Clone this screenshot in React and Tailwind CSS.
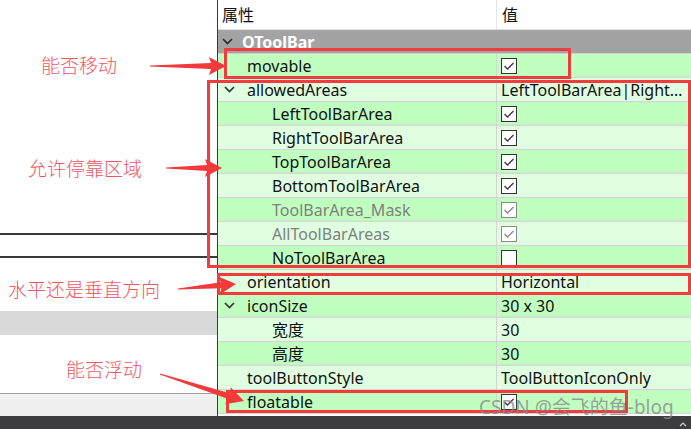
import React from "react";

const rows = [
  { name: "movable", level: 1, check: "on", tone: "dark" },
  { name: "allowedAreas", level: 1, expand: true, value: "LeftToolBarArea|RightToolBarArea|TopToolBarArea", tone: "light" },
  { name: "LeftToolBarArea", level: 2, check: "on", tone: "dark" },
  { name: "RightToolBarArea", level: 2, check: "on", tone: "light" },
  { name: "TopToolBarArea", level: 2, check: "on", tone: "dark" },
  { name: "BottomToolBarArea", level: 2, check: "on", tone: "light" },
  { name: "ToolBarArea_Mask", level: 2, check: "dis", tone: "dark", muted: true },
  { name: "AllToolBarAreas", level: 2, check: "dis", tone: "light", muted: true },
  { name: "NoToolBarArea", level: 2, check: "off", tone: "dark" },
  { name: "orientation", level: 1, value: "Horizontal", tone: "light" },
  { name: "iconSize", level: 1, expand: true, value: "30 x 30", tone: "dark" },
  { name: "宽度", level: 2, value: "30", tone: "light" },
  { name: "高度", level: 2, value: "30", tone: "dark" },
  { name: "toolButtonStyle", level: 1, value: "ToolButtonIconOnly", tone: "light" },
  { name: "floatable", level: 1, check: "on", tone: "dark" },
];

function Chevron({ color = "#333" }) {
  return (
    <svg width="11" height="7" viewBox="0 0 11 7">
      <path d="M1 1 L5.5 5.5 L10 1" fill="none" stroke={color} strokeWidth="1.7" />
    </svg>
  );
}

function Check({ state }) {
  const dis = state === "dis";
  return (
    <div
      className={`w-[16px] h-[16px] bg-white border flex items-center justify-center ${
        dis ? "border-[#8a8a8a]" : "border-[#333]"
      }`}
    >
      {state !== "off" && (
        <svg width="12" height="10" viewBox="0 0 12 10">
          <path
            d="M1.5 5 L4.5 8 L10.5 2"
            fill="none"
            stroke={dis ? "#8c8c8c" : "#3c3c3c"}
            strokeWidth="1.4"
          />
        </svg>
      )}
    </div>
  );
}

// long thin red annotation arrow, tail at (x1,y1), tip at (x2,y2)
function Arrow({ x1, y1, x2, y2 }) {
  const dx = x2 - x1;
  const dy = y2 - y1;
  const L = Math.sqrt(dx * dx + dy * dy);
  const a = (Math.atan2(dy, dx) * 180) / Math.PI;
  const pts = `0,-0.5 ${L - 15},-3 ${L - 17},-9 ${L},0 ${L - 17},9 ${L - 15},3 0,0.5`;
  return (
    <g transform={`translate(${x1} ${y1}) rotate(${a})`}>
      <polygon points={pts} fill="#f23a3a" />
    </g>
  );
}

function Box({ className }) {
  return <div className={`absolute border-[3px] border-[#f03c3c] ${className}`} />;
}

export default function App() {
  const cjk = { fontFamily: '"Noto Sans", "Noto Sans CJK SC", sans-serif' };
  return (
    <div className="relative w-[691px] h-[429px] overflow-hidden bg-white" style={cjk}>
      <div className="flex h-[416px]">
        {/* left side panel */}
        <div className="w-[218px] shrink-0 flex flex-col border-r border-[#3a3a3a]">
          <div className="h-[233px]" />
          <div className="h-[25px] border-t-2 border-b-2 border-[#3a3a3a]" />
          <div className="h-[53px]" />
          <div className="h-[24px] bg-[#d9d9d9]" />
          <div className="h-[58px]" />
          <div className="flex-1 border-t border-[#a0a0a0] bg-[#f0f0f0]" />
        </div>

        {/* property editor */}
        <div className="flex-1 min-w-0 flex flex-col text-[16px] text-[#111]">
          <div className="h-[30px] shrink-0 flex bg-white border-b border-[#e0e0e0]">
            <div className="w-[279px] shrink-0 pl-[4px] flex items-center border-r border-[#e6e6e6]">属性</div>
            <div className="flex-1 pl-[5px] flex items-center">值</div>
          </div>
          <div className="h-[24px] shrink-0 flex items-center bg-[#a3a3a3] border-b border-[#d0d0d0]">
            <div className="w-[24px] pl-[4px] flex items-center">
              <Chevron color="#2e2e2e" />
            </div>
            <span className="text-white font-bold">QToolBar</span>
          </div>
          {rows.map((r) => (
            <div
              key={r.name}
              className={`h-[24px] shrink-0 flex border-b border-[#d4d4d4] ${
                r.tone === "dark" ? "bg-[#c0ffc0]" : "bg-[#e0ffe0]"
              }`}
            >
              <div className="w-[279px] shrink-0 flex items-center border-r border-[#d4d4d4]">
                <div className="w-[29px] pl-[6px] flex items-center">
                  {r.expand && <Chevron />}
                </div>
                <span className={`${r.level === 2 ? "pl-[25px]" : ""} ${r.muted ? "text-[#808080]" : ""}`}>
                  {r.name}
                </span>
              </div>
              <div className="flex-1 min-w-0 pl-[4px] pr-[2px] flex items-center">
                {r.check ? (
                  <Check state={r.check} />
                ) : (
                  <span className="min-w-0 whitespace-nowrap overflow-hidden text-ellipsis">{r.value}</span>
                )}
              </div>
            </div>
          ))}
        </div>
      </div>
      <div className="h-[13px] bg-[#3c3c3e] flex justify-end items-end pr-[4px]">
        <svg width="8" height="5" viewBox="0 0 8 5" className="mb-[2px]">
          <path d="M1 4 L4 1 L7 4" fill="none" stroke="#cfcfcf" strokeWidth="1.2" />
        </svg>
      </div>

      {/* annotations */}
      <Box className="left-[224px] top-[48px] w-[347px] h-[31px]" />
      <Box className="left-[207px] top-[80px] w-[484px] h-[188px]" />
      <Box className="left-[217px] top-[273px] w-[474px] h-[22px]" />
      <Box className="left-[226px] top-[390px] w-[402px] h-[23px]" />

      <svg className="absolute inset-0" width="691" height="429">
        <Arrow x1={150} y1={66} x2={226} y2={66} />
        <Arrow x1={166} y1={168} x2={222} y2={168} />
        <Arrow x1={178} y1={289} x2={236} y2={284} />
        <Arrow x1={160} y1={374} x2={244} y2={401} />
      </svg>

      <div
        className="absolute inset-0 text-[19px] font-light text-[#f25560] leading-none"
        style={{ fontFamily: '"Noto Sans CJK SC", sans-serif' }}
      >
        <span className="absolute left-[41px] top-[55px] whitespace-nowrap">能否移动</span>
        <span className="absolute left-[28px] top-[158px] whitespace-nowrap">允许停靠区域</span>
        <span className="absolute left-[8px] top-[279px] whitespace-nowrap">水平还是垂直方向</span>
        <span className="absolute left-[66px] top-[359px] whitespace-nowrap">能否浮动</span>
      </div>

      <div className="absolute left-[479px] top-[394px] text-[19px] leading-[26px] text-[#888]/80 whitespace-nowrap">
        CSDN @会飞的鱼-blog
      </div>
    </div>
  );
}
